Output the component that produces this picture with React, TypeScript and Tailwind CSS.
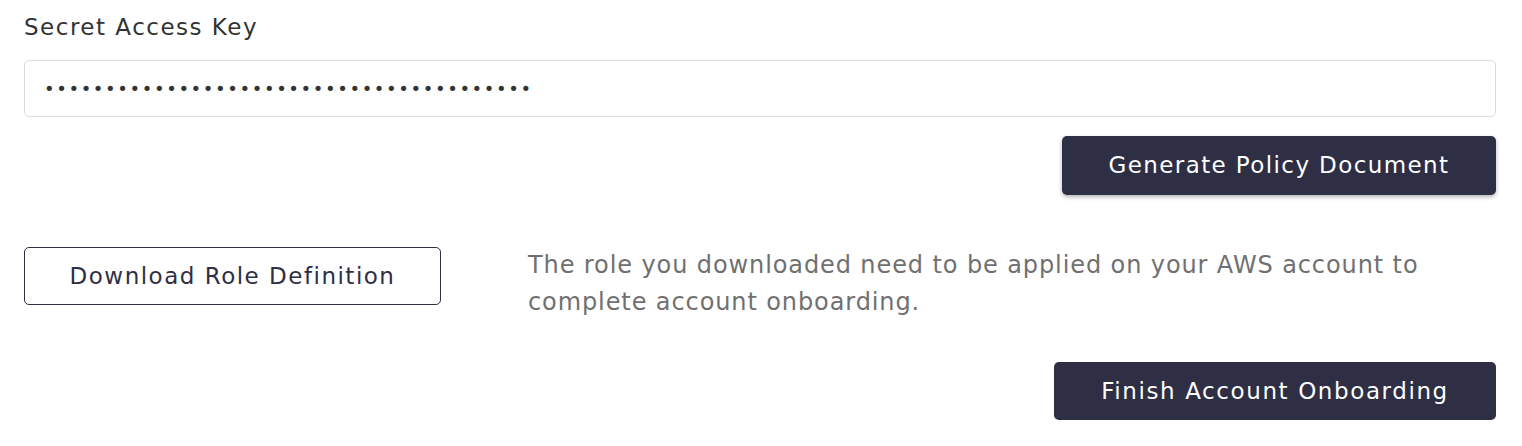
const dots = "•".repeat(40);

const App = () => {
  return (
    <div className="w-[1522px] h-[446px] bg-white pl-6 pr-[26px] pt-[11px] font-['DejaVu_Sans',sans-serif]">
      <label className="block text-[23px] leading-[32px] tracking-[1.5px] text-[#333]">Secret Access Key</label>
      <div className="mt-[17px] h-[57px] rounded-[5px] border border-[#dcdcdc] flex items-center pl-[19px] text-[18px] tracking-[1.6px] text-[#333]">
        {dots}
      </div>
      <div className="flex justify-end mt-[19px]">
        <button className="h-[59px] w-[434px] rounded-[5px] bg-[#2e2e45] text-white text-[23px] tracking-[1.4px] shadow-[0_2px_4px_rgba(0,0,0,0.3)]">
          Generate Policy Document
        </button>
      </div>
      <div className="flex mt-[52px]">
        <button className="h-[58px] w-[417px] shrink-0 rounded-[5px] border border-[#2e2e45] text-[#2e2e45] text-[23px] tracking-[1.5px]">
          Download Role Definition
        </button>
        <p className="ml-[87px] flex-1 text-[24px] leading-[37px] tracking-[0.9px] text-[#707070]">
          The role you downloaded need to be applied on your AWS account to complete account onboarding.
        </p>
      </div>
      <div className="flex justify-end mt-[41px]">
        <button className="h-[58px] w-[442px] rounded-[5px] bg-[#2e2e45] text-white text-[23px] tracking-[1.6px]">
          Finish Account Onboarding
        </button>
      </div>
    </div>
  );
};

export default App;
